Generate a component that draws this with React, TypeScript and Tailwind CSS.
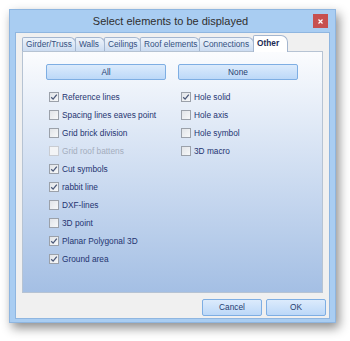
import React from 'react';

const leftItems = [
    { label: 'Reference lines', checked: true },
    { label: 'Spacing lines eaves point', checked: false },
    { label: 'Grid brick division', checked: false },
    { label: 'Grid roof battens', checked: false, disabled: true },
    { label: 'Cut symbols', checked: true },
    { label: 'rabbit line', checked: true },
    { label: 'DXF-lines', checked: false },
    { label: '3D point', checked: false },
    { label: 'Planar Polygonal 3D', checked: true },
    { label: 'Ground area', checked: true },
];

const rightItems = [
    { label: 'Hole solid', checked: true },
    { label: 'Hole axis', checked: false },
    { label: 'Hole symbol', checked: false },
    { label: '3D macro', checked: false },
];

const tabs = [
    { label: 'Girder/Truss', w: 'w-[54px]' },
    { label: 'Walls', w: 'w-[30px]' },
    { label: 'Ceilings', w: 'w-[37px]' },
    { label: 'Roof elements', w: 'w-[60px]' },
    { label: 'Connections', w: 'w-[55px]' },
];

const Check = ({ label, checked, disabled }: { label: string; checked: boolean; disabled?: boolean }) => (
    <div className="h-[18px] flex items-center pl-[3px]">
        <div
            className={`w-[10px] h-[10px] border flex items-center justify-center ${
                disabled ? 'border-[#c9ccd2] bg-[#f3f4f6]' : 'border-[#9ba1aa] bg-gradient-to-br from-[#e1e4e8] to-[#f7f8f9]'
            }`}
        >
            {checked && (
                <svg width="8" height="8" viewBox="0 0 8 8">
                    <path d="M1.2 4.2 L3.1 6.1 L6.8 1.6" fill="none" stroke="#4a5878" strokeWidth="1.3" />
                </svg>
            )}
        </div>
        <span className={`ml-[3px] text-[8.3px] ${disabled ? 'text-[#a4adbd]' : 'text-[#243470]'}`}>{label}</span>
    </div>
);

const BlueButton = ({ children, className = '' }: { children: React.ReactNode; className?: string }) => (
    <div
        className={`flex items-center justify-center border border-[#7eaee3] rounded-[2px] bg-gradient-to-b from-[#dcebfc] to-[#bcd8f8] text-[8.3px] text-[#27406f] ${className}`}
    >
        {children}
    </div>
);

export default function App() {
    return (
        <div className="w-[350px] h-[341px] bg-white pt-[9px] pl-[9px] font-['Liberation_Sans',Arial,sans-serif]">
            <div className="w-[327px] h-[314px] bg-[#a9cdf2] border border-[#8fb6e0] shadow-[3px_5px_10px_rgba(0,0,0,0.45)] flex flex-col px-[5px] pb-[3px] relative">
                {/* title bar */}
                <div className="h-[22px] flex items-center justify-center text-[11px] text-[#2f2f2f] pr-[4px]">
                    Select elements to be displayed
                </div>
                <div className="absolute right-[7px] top-[4px] w-[15px] h-[14px] bg-[#c75050] flex items-center justify-center">
                    <svg width="5" height="5" viewBox="0 0 5 5">
                        <path d="M0.5 0.5 L4.5 4.5 M4.5 0.5 L0.5 4.5" stroke="#fff" strokeWidth="1.2" />
                    </svg>
                </div>

                {/* client area */}
                <div className="flex-1 bg-[#f0f0f0] border border-[#8fb6e0] flex flex-col pl-[6px] pr-[7px] pt-[3px]">
                    <div className="h-[15px] flex items-end relative z-10">
                        {tabs.map((t) => (
                            <div
                                key={t.label}
                                className={`${t.w} h-[14px] -mr-[1px] border border-b-0 border-[#a4b6cf] rounded-tr-[6px] rounded-tl-[2px] bg-gradient-to-b from-[#eef4fb] to-[#ccdcf1] flex items-center pl-[3px] text-[8.3px] text-[#34507f] whitespace-nowrap`}
                            >
                                {t.label}
                            </div>
                        ))}
                        <div className="w-[35px] h-[17px] -mb-[1px] border border-b-0 border-[#a4b6cf] rounded-tr-[7px] rounded-tl-[2px] bg-white flex items-center pl-[3px] pb-[1px] text-[8.3px] font-bold text-[#1b2a55]">
                            Other
                        </div>
                    </div>
                    <div className="h-[242px] w-[301px] border border-[#b6c3d3] bg-gradient-to-b from-[#fbfcfe] to-[#a4bfe4] pt-[12px] pl-[23px]">
                        <div className="flex gap-[12px]">
                            <div className="w-[120px]">
                                <BlueButton className="h-[16px]">All</BlueButton>
                                <div className="mt-[8px]">
                                    {leftItems.map((i) => (
                                        <Check key={i.label} {...i} />
                                    ))}
                                </div>
                            </div>
                            <div className="w-[120px]">
                                <BlueButton className="h-[16px]">None</BlueButton>
                                <div className="mt-[8px]">
                                    {rightItems.map((i) => (
                                        <Check key={i.label} {...i} />
                                    ))}
                                </div>
                            </div>
                        </div>
                    </div>
                    <div className="flex justify-end gap-[4px] mt-[6px] -mr-[4px]">
                        <BlueButton className="w-[60px] h-[17px]">Cancel</BlueButton>
                        <BlueButton className="w-[60px] h-[17px]">OK</BlueButton>
                    </div>
                </div>
            </div>
        </div>
    );
}
